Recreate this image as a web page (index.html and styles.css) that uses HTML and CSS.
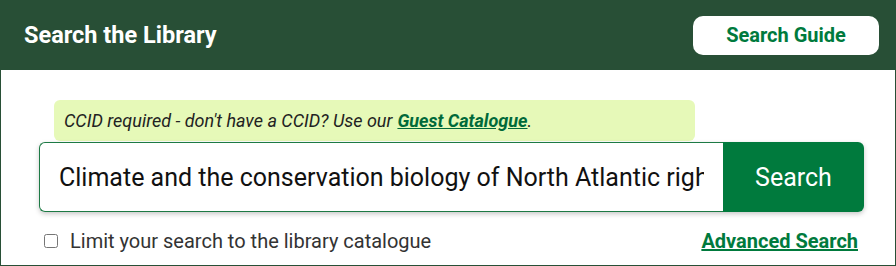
FILE: index.html
```html
<!DOCTYPE html>
<html>
<head>
<meta charset="utf-8">
<link rel="stylesheet" href="styles.css">
</head>
<body>
<div class="widget">
  <header class="head">
    <h1 class="title">Search the Library</h1>
    <a class="guide" href="#">Search Guide</a>
  </header>
  <div class="main">
    <div class="notice">CCID required - don't have a CCID? Use our <a href="#">Guest Catalogue</a>.</div>
    <form class="search">
      <input class="query" type="text" value="Climate and the conservation biology of North Atlantic right whales">
      <button class="go" type="button">Search</button>
    </form>
    <div class="opts">
      <label class="limit"><input type="checkbox" class="cb"> Limit your search to the library catalogue</label>
      <a class="adv" href="#">Advanced Search</a>
    </div>
  </div>
</div>
</body>
</html>
```
FILE: styles.css
```css
* { box-sizing: border-box; }
html, body { margin: 0; padding: 0; background: #fff; }
body { font-family: Roboto, "Liberation Sans", sans-serif; }
.widget { width: 896px; height: 266px; }
.head {
  height: 70px;
  background: #284f36;
  display: flex;
  align-items: center;
  justify-content: space-between;
  padding: 0 17px 0 24px;
}
.title { margin: 0 0 1px 0; color: #fff; font-size: 23.5px; font-weight: 700; }
.guide {
  width: 186px; height: 39px;
  background: #fff; color: #007a3d;
  border-radius: 10px;
  font-weight: 700; font-size: 20px;
  text-decoration: none;
  display: flex; align-items: center; justify-content: center;
}
.main {
  height: 196px;
  border: 1px solid #284f36;
  border-top: none;
  padding: 30px 31px 0 38px;
}
.notice {
  margin-left: 15px;
  width: 641px; height: 41px;
  background: #e6f9b8;
  border-radius: 6px;
  font-style: italic; font-size: 18px; color: #222;
  padding: 0 10px;
  display: flex; align-items: center;
}
.notice a { color: #00693a; font-weight: 700; margin-left: 5px; text-decoration: underline; }
.search {
  margin: 1px 0 0 0;
  display: flex;
  width: 825px; height: 70px;
  border-radius: 6px;
  box-shadow: 0 2px 5px rgba(0,0,0,0.22);
}
.query {
  width: 684px; height: 70px;
  border: 1px solid #1d7a45;
  border-right: none;
  border-radius: 6px 0 0 6px;
  padding: 0 19px;
  font-family: Roboto, "Liberation Sans", sans-serif;
  font-size: 25px; color: #111;
  outline: none;
}
.go {
  width: 141px; height: 70px;
  border: none;
  background: #007a3d; color: #fff;
  border-radius: 0 6px 6px 0;
  font-family: Roboto, "Liberation Sans", sans-serif;
  font-size: 25px;
}
.opts {
  display: flex; justify-content: space-between; align-items: center;
  margin-top: 17px;
  padding-left: 5px;
  padding-right: 6px;
}
.limit { font-size: 20px; color: #333; display: flex; align-items: center; }
.cb { width: 14px; height: 14px; margin: 0 12px 0 0; }
.adv { color: #007a3d; font-weight: 700; font-size: 20px; text-decoration: underline; }
```
